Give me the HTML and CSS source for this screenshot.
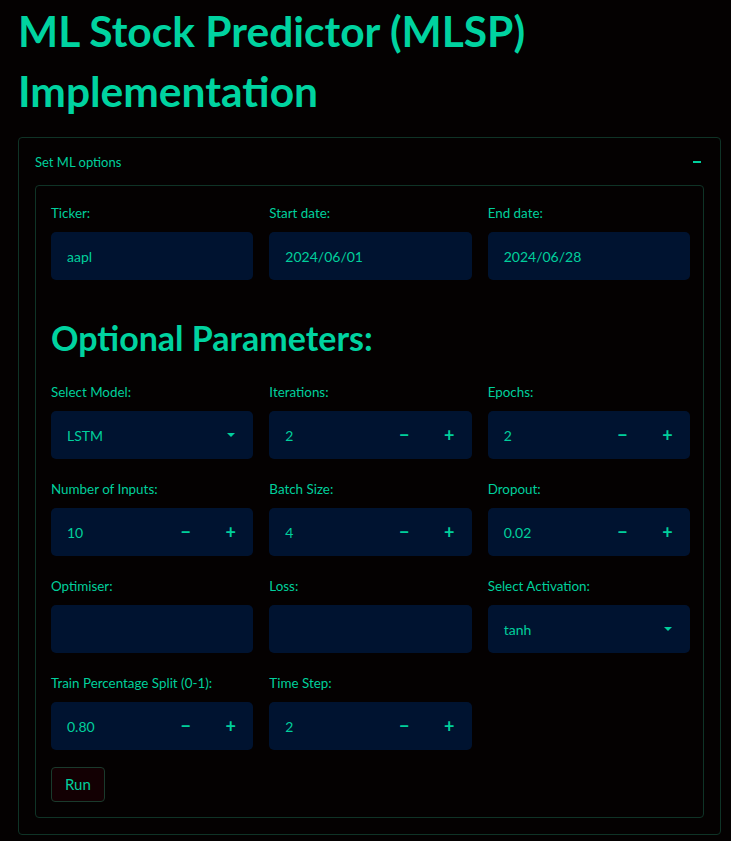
FILE: index.html
```html
<!DOCTYPE html>
<html lang="en">

<head>
    <meta charset="UTF-8">
    <meta name="viewport" content="width=device-width, initial-scale=1.0">
    <title>ML Stock Predictor (MLSP) Implementation</title>
    <link rel="stylesheet" href="styles.css">
</head>

<body>
    <main class="page">
        <h1 class="title">ML Stock Predictor (MLSP) Implementation</h1>

        <section class="expander">
            <div class="expander-head">
                <span>Set ML options</span>
                <span class="collapse-icon"></span>
            </div>

            <form class="options" autocomplete="off">
                <div class="grid">
                    <label class="field">
                        <span class="label">Ticker:</span>
                        <span class="box"><span class="value">aapl</span></span>
                    </label>
                    <label class="field">
                        <span class="label">Start date:</span>
                        <span class="box"><span class="value">2024/06/01</span></span>
                    </label>
                    <label class="field">
                        <span class="label">End date:</span>
                        <span class="box"><span class="value">2024/06/28</span></span>
                    </label>
                </div>

                <h2 class="subtitle">Optional Parameters:</h2>

                <div class="grid">
                    <label class="field">
                        <span class="label">Select Model:</span>
                        <span class="box select"><span class="value">LSTM</span><span class="caret"></span></span>
                    </label>
                    <label class="field">
                        <span class="label">Iterations:</span>
                        <span class="box number"><span class="value">2</span><span class="step">&minus;</span><span class="step">+</span></span>
                    </label>
                    <label class="field">
                        <span class="label">Epochs:</span>
                        <span class="box number"><span class="value">2</span><span class="step">&minus;</span><span class="step">+</span></span>
                    </label>

                    <label class="field">
                        <span class="label">Number of Inputs:</span>
                        <span class="box number"><span class="value">10</span><span class="step">&minus;</span><span class="step">+</span></span>
                    </label>
                    <label class="field">
                        <span class="label">Batch Size:</span>
                        <span class="box number"><span class="value">4</span><span class="step">&minus;</span><span class="step">+</span></span>
                    </label>
                    <label class="field">
                        <span class="label">Dropout:</span>
                        <span class="box number"><span class="value">0.02</span><span class="step">&minus;</span><span class="step">+</span></span>
                    </label>

                    <label class="field">
                        <span class="label">Optimiser:</span>
                        <span class="box"><span class="value"></span></span>
                    </label>
                    <label class="field">
                        <span class="label">Loss:</span>
                        <span class="box"><span class="value"></span></span>
                    </label>
                    <label class="field">
                        <span class="label">Select Activation:</span>
                        <span class="box select"><span class="value">tanh</span><span class="caret"></span></span>
                    </label>

                    <label class="field">
                        <span class="label">Train Percentage Split (0-1):</span>
                        <span class="box number"><span class="value">0.80</span><span class="step">&minus;</span><span class="step">+</span></span>
                    </label>
                    <label class="field">
                        <span class="label">Time Step:</span>
                        <span class="box number"><span class="value">2</span><span class="step">&minus;</span><span class="step">+</span></span>
                    </label>
                </div>

                <button type="submit" class="run">Run</button>
            </form>
        </section>
    </main>
</body>

</html>
```

FILE: styles.css
```css
* {
    box-sizing: border-box;
    font-family: Lato, 'Open Sans', sans-serif;
}

body {
    margin: 0;
    background-color: #040101;
    color: #00cf9c;
}

.page {
    padding: 0 10px 6px 18px;
}

.title {
    margin: 0;
    padding: 1px 0 16px;
    font-size: 42.5px;
    font-weight: 700;
    line-height: 60px;
    color: #00d3a0;
}

.expander {
    border: 1px solid #0f3326;
    border-radius: 4px;
    padding: 0 16px 16px;
}

.expander-head {
    display: flex;
    align-items: center;
    justify-content: space-between;
    height: 47px;
    padding-right: 3px;
    font-size: 13px;
}

.collapse-icon {
    width: 8px;
    height: 2px;
    background-color: #00cf9c;
}

.options {
    border: 1px solid #0f3326;
    border-radius: 4px;
    padding: 17px 13px 15px 15px;
}

.grid {
    display: grid;
    grid-template-columns: repeat(3, 1fr);
    gap: 20px 16px;
}

.field {
    display: flex;
    flex-direction: column;
    gap: 9px;
}

.label {
    font-size: 13.4px;
    line-height: 20px;
}

.box {
    display: flex;
    align-items: center;
    height: 48px;
    border-radius: 5px;
    background-color: #001330;
    font-size: 14px;
}

.value {
    flex: 1;
    padding-left: 16px;
}

.caret {
    width: 0;
    height: 0;
    margin-right: 18px;
    border-left: 4px solid transparent;
    border-right: 4px solid transparent;
    border-top: 4px solid #00cf9c;
}

.step {
    width: 45px;
    text-align: center;
    font-size: 18px;
    font-weight: 700;
}

.subtitle {
    margin: 0;
    padding: 36px 0 22px;
    font-size: 34px;
    font-weight: 700;
    line-height: 44px;
    color: #00d3a0;
}

.run {
    display: block;
    margin-top: 17px;
    padding: 6px 13px;
    border: 1px solid #1a3a2c;
    border-radius: 4px;
    background-color: #130003;
    color: #00cf9c;
    font-size: 15px;
    line-height: 21px;
}
```
